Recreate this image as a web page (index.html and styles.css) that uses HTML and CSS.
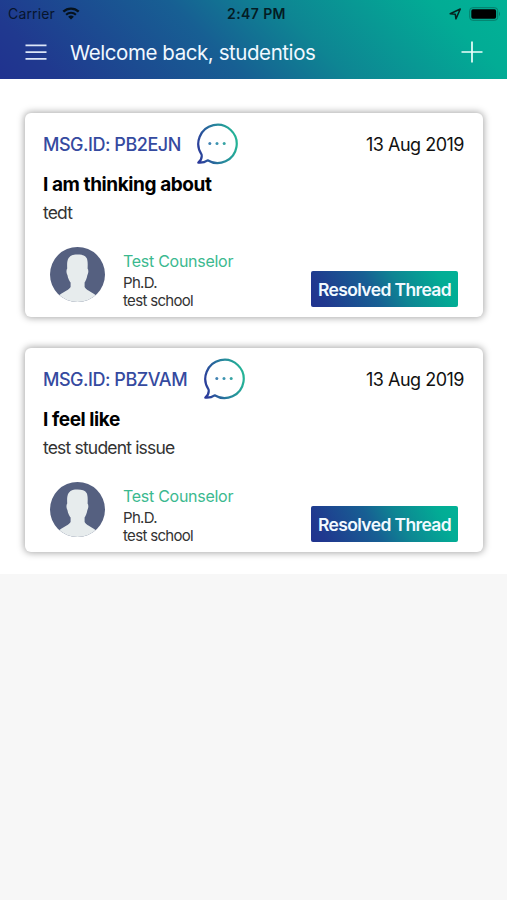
FILE: index.html
```html
<!DOCTYPE html>
<html lang="en">
<head>
<meta charset="utf-8">
<title>Messages</title>
<link rel="stylesheet" href="styles.css">
</head>
<body>
<svg class="defs" width="0" height="0" aria-hidden="true">
  <defs>
    <linearGradient id="bubbleStroke" gradientUnits="userSpaceOnUse" x1="1" y1="25" x2="41" y2="17">
      <stop offset="0" stop-color="#2b3a9a"/>
      <stop offset="0.5" stop-color="#277f9d"/>
      <stop offset="1" stop-color="#24b596"/>
    </linearGradient>
    <clipPath id="avatarClip"><circle cx="27.5" cy="27.5" r="27.5"/></clipPath>
    <symbol id="bubble" viewBox="0 0 42 42">
      <path d="M5.6 31.6 A19.2 19.2 0 1 1 11.6 37.3 C8.8 39.4 5.6 39.9 2.3 39.6 C5 37.4 6.2 34.8 5.6 31.6 Z" fill="none" stroke="url(#bubbleStroke)" stroke-width="2.2" stroke-linejoin="round"/>
      <circle cx="13.8" cy="20.6" r="1.5" fill="#4283b3"/>
      <circle cx="21" cy="20.6" r="1.5" fill="#3c94b0"/>
      <circle cx="28.2" cy="20.6" r="1.5" fill="#38a4a4"/>
    </symbol>
    <symbol id="avatar" viewBox="0 0 55 55">
      <g clip-path="url(#avatarClip)">
        <rect width="55" height="55" fill="#556080"/>
        <path d="M18.6 11 C21 8 24 7.6 27.5 7.6 C32 7.6 35 8.4 36.6 11 C37.9 13.5 37.8 17 37.6 21.5 C38.8 23 38.4 26.5 37.4 28 C36.8 31.5 35.6 34 34.6 35.5 V40 C36 43 41 44.5 45.5 48 V56 H9.5 V48 C14 44.5 19 43 20.6 40 V35.5 C19.4 34 18 31.5 17.4 28 C16.4 26.5 16 23 17.2 21.5 C17 17 17 13.5 18.6 11 Z" fill="#e7eced"/>
      </g>
    </symbol>
  </defs>
</svg>

<header class="top">
  <div class="status">
    <div class="status-left">
      <span class="carrier">Carrier</span>
      <svg class="wifi" width="18" height="13" viewBox="0 0 18 13" fill="none" stroke="#06121c">
        <path d="M1.3 4.6 A11.3 11.3 0 0 1 16.7 4.6" stroke-width="2.3"/>
        <path d="M4.1 7.7 A7.2 7.2 0 0 1 13.9 7.7" stroke-width="2.1"/>
        <path d="M9 12.6 L6.1 9.7 A4.3 4.3 0 0 1 11.9 9.7 Z" fill="#06121c" stroke="none"/>
      </svg>
    </div>
    <span class="clock">2:47 PM</span>
    <div class="status-right">
      <svg width="13" height="12" viewBox="0 0 13 12"><path d="M1.2 5.8 L11.3 1 L6.9 10.9 L6.3 6.3 Z" fill="none" stroke="#06231f" stroke-width="1.5" stroke-linejoin="round"/></svg>
      <svg width="32" height="14" viewBox="0 0 32 14">
        <rect x="0.7" y="0.7" width="28" height="12.6" rx="3" fill="none" stroke="#067c69" stroke-width="1"/>
        <rect x="2.3" y="2.3" width="24.8" height="9.4" rx="1.6" fill="#000"/>
        <path d="M30 4.6 Q32 7 30 9.4 Z" fill="#067c69"/>
      </svg>
    </div>
  </div>
  <div class="nav">
    <svg width="22" height="16" viewBox="0 0 22 16" stroke="#dce6f8" stroke-width="1.7"><path d="M0.5 1.3H21.5M0.5 8.1H21.5M0.5 14.9H21.5"/></svg>
    <h1 class="welcome">Welcome back, studentios</h1>
    <svg class="plus" width="22" height="22" viewBox="0 0 22 22" stroke="#edfffb" stroke-width="1.7"><path d="M0.5 11H21.5M11 0.5V21.5"/></svg>
  </div>
</header>

<main class="list">
  <article class="card">
    <div class="row">
      <span class="msgid">MSG.ID: PB2EJN</span>
      <svg class="bubble" width="42" height="42"><use href="#bubble"/></svg>
      <span class="date">13 Aug 2019</span>
    </div>
    <h2 class="title">I am thinking about</h2>
    <p class="body">tedt</p>
    <div class="foot">
      <svg class="avatar" width="55" height="55"><use href="#avatar"/></svg>
      <div class="person">
        <span class="name">Test Counselor</span>
        <span class="meta">Ph.D.</span>
        <span class="meta">test school</span>
      </div>
      <span class="button">Resolved Thread</span>
    </div>
  </article>
  <article class="card">
    <div class="row">
      <span class="msgid">MSG.ID: PBZVAM</span>
      <svg class="bubble" width="42" height="42"><use href="#bubble"/></svg>
      <span class="date">13 Aug 2019</span>
    </div>
    <h2 class="title">I feel like</h2>
    <p class="body">test student issue</p>
    <div class="foot">
      <svg class="avatar" width="55" height="55"><use href="#avatar"/></svg>
      <div class="person">
        <span class="name">Test Counselor</span>
        <span class="meta">Ph.D.</span>
        <span class="meta">test school</span>
      </div>
      <span class="button">Resolved Thread</span>
    </div>
  </article>
</main>
</body>
</html>
```
FILE: styles.css
```css
* { box-sizing: border-box; margin: 0; padding: 0; }
:root {
  --stops: #20328f 0%, #20398f 10%, #175f93 42%, #0e8593 60%, #02ac95 87%, #02b296 100%;
}
body {
  min-height: 900px;
  background: #f7f7f7;
  font-family: Inter, "Liberation Sans", sans-serif;
  color: #000;
  white-space: nowrap;
}
svg { display: block; flex: none; }
.defs { position: absolute; }
.top { height: 79px; background: linear-gradient(45deg, var(--stops)); }
.status {
  height: 27px;
  display: grid;
  grid-template-columns: 1fr auto 1fr;
  align-items: center;
  padding: 0 6px 0 8px;
}
.status-left { display: flex; align-items: center; gap: 7px; }
.status-right { display: flex; align-items: center; justify-content: flex-end; gap: 7px; }
.carrier { font-size: 14px; letter-spacing: 0.15px; color: #07152d; }
.clock { padding-left: 4px; font-size: 14px; font-weight: 600; letter-spacing: 0.4px; color: #041c24; }
.nav { height: 50px; display: flex; align-items: center; padding: 0 24px 0 25px; }
.welcome {
  margin-left: 23px;
  font-size: 20.5px;
  font-weight: 400;
  letter-spacing: -0.43px;
  color: #f0f8ff;
}
.plus { margin-left: auto; }
.list {
  height: 495px;
  padding: 34px 24px 0 25px;
  background: #fff;
  display: flex;
  flex-direction: column;
  gap: 31px;
}
.card {
  height: 204px;
  flex: none;
  padding: 10px 19px 0 18px;
  background: #fff;
  border-radius: 6px;
  box-shadow: 0 0 7px 1px rgba(0, 0, 0, 0.34);
}
.row { height: 42px; display: flex; align-items: center; }
.msgid { font-size: 18px; font-weight: 500; letter-spacing: -0.47px; color: #354a9f; }
.bubble { margin-left: 15.5px; }
.date { margin-left: auto; font-size: 18px; letter-spacing: -0.5px; color: #111; }
.title { margin-top: 6px; font-size: 19px; line-height: 28px; font-weight: 700; letter-spacing: -0.42px; }
.body { font-size: 17.5px; line-height: 28px; letter-spacing: -0.82px; color: #333; }
.foot { display: flex; height: 74px; margin-top: 20px; padding-left: 7px; }
.person { display: flex; flex-direction: column; margin-left: 18px; padding-top: 3px; }
.name { font-size: 16px; line-height: 22px; letter-spacing: -0.28px; color: #3bb98f; }
.meta { font-size: 15px; line-height: 18px; letter-spacing: -0.68px; color: #333; }
.name + .meta { margin-top: 2px; }
.button {
  margin: 24px 6px 0 auto;
  width: 147px;
  height: 36px;
  border-radius: 2px;
  background: linear-gradient(62deg, var(--stops));
  color: #f2faff;
  font-size: 17.5px;
  font-weight: 600;
  line-height: 37px;
  text-align: center;
  letter-spacing: -0.62px;
}
```
